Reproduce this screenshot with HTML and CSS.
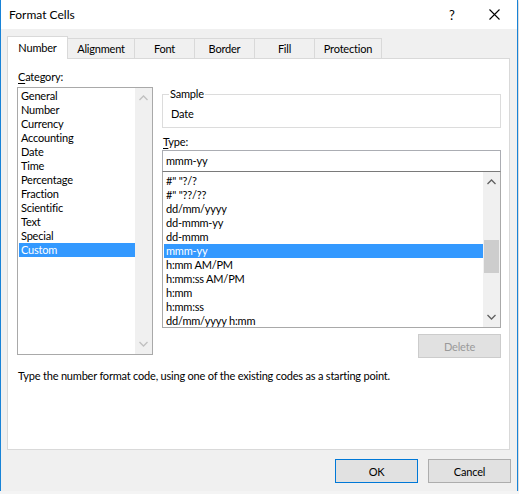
FILE: index.html
```html
<!DOCTYPE html>
<html lang="en">
<head>
    <meta charset="UTF-8">
    <title>Format Cells</title>
    <link rel="stylesheet" href="styles.css">
</head>
<body>

<div class="dialog">
    <div class="titlebar">
        <span class="title">Format Cells</span>
        <span class="help">?</span>
        <span class="close">
            <svg width="11" height="11" viewBox="0 0 11 11"><path d="M0.5 0.5L10.5 10.5M10.5 0.5L0.5 10.5" stroke="#000" stroke-width="1.1" fill="none"/></svg>
        </span>
    </div>

    <div class="tabs">
        <div class="tab active">Number</div>
        <div class="tab w67">Alignment</div>
        <div class="tab">Font</div>
        <div class="tab">Border</div>
        <div class="tab">Fill</div>
        <div class="tab w67">Protection</div>
    </div>

    <div class="panel">
        <div class="columns">
            <div class="left">
                <div class="label"><u>C</u>ategory:</div>
                <div class="listbox category">
                    <div class="items">
                        <div class="item">General</div>
                        <div class="item">Number</div>
                        <div class="item">Currency</div>
                        <div class="item">Accounting</div>
                        <div class="item">Date</div>
                        <div class="item">Time</div>
                        <div class="item">Percentage</div>
                        <div class="item">Fraction</div>
                        <div class="item">Scientific</div>
                        <div class="item">Text</div>
                        <div class="item">Special</div>
                        <div class="item selected">Custom</div>
                    </div>
                    <div class="scrollbar disabled">
                        <svg class="arrow" width="9" height="6" viewBox="0 0 9 6"><path d="M0.5 5L4.5 1L8.5 5" stroke="currentColor" stroke-width="1.3" fill="none"/></svg>
                        <div class="track"></div>
                        <svg class="arrow" width="9" height="6" viewBox="0 0 9 6"><path d="M0.5 1L4.5 5L8.5 1" stroke="currentColor" stroke-width="1.3" fill="none"/></svg>
                    </div>
                </div>
            </div>

            <div class="right">
                <fieldset class="sample">
                    <legend>Sample</legend>
                    <div class="sample-value">Date</div>
                </fieldset>

                <div class="label type-label"><u>T</u>ype:</div>
                <div class="input">mmm-yy</div>
                <div class="listbox types">
                    <div class="items">
                        <div class="item">#" "?/?</div>
                        <div class="item">#" "??/??</div>
                        <div class="item">dd/mm/yyyy</div>
                        <div class="item">dd-mmm-yy</div>
                        <div class="item">dd-mmm</div>
                        <div class="item selected">mmm-yy</div>
                        <div class="item">h:mm AM/PM</div>
                        <div class="item">h:mm:ss AM/PM</div>
                        <div class="item">h:mm</div>
                        <div class="item">h:mm:ss</div>
                        <div class="item">dd/mm/yyyy h:mm</div>
                    </div>
                    <div class="scrollbar">
                        <svg class="arrow" width="9" height="6" viewBox="0 0 9 6"><path d="M0.5 5L4.5 1L8.5 5" stroke="currentColor" stroke-width="1.3" fill="none"/></svg>
                        <div class="track"><div class="thumb"></div></div>
                        <svg class="arrow" width="9" height="6" viewBox="0 0 9 6"><path d="M0.5 1L4.5 5L8.5 1" stroke="currentColor" stroke-width="1.3" fill="none"/></svg>
                    </div>
                </div>
                <div class="delete-row">
                    <button class="button disabled">Delete</button>
                </div>
            </div>
        </div>

        <p class="hint">Type the number format code, using one of the existing codes as a starting point.</p>
    </div>

    <div class="footer">
        <button class="button default">OK</button>
        <button class="button">Cancel</button>
    </div>
</div>

</body>
</html>
```

FILE: styles.css
```css
body {
    margin: 0;
    background: #f4f4f4;
    font-family: Lato, "Noto Sans", sans-serif;
    font-size: 11px;
    letter-spacing: -0.2px;
    color: #000;
}
.dialog {
    width: 516px;
    height: 491px;
    border-left: 1px solid #1883d7;
    border-right: 1px solid #1883d7;
    background: #f0f0f0;
    box-shadow: 0 1px 3px rgba(0, 0, 0, 0.25);
    display: flex;
    flex-direction: column;
}
.titlebar {
    height: 29px;
    background: #fff;
    display: flex;
    align-items: center;
    padding-left: 8px;
    font-size: 12px;
    letter-spacing: 0;
}
.title {
    flex: 1;
}
.help {
    width: 20px;
    margin-right: 27px;
    text-align: center;
    font-size: 13px;
}
.close {
    width: 11px;
    margin-right: 17px;
    display: flex;
}
.tabs {
    display: flex;
    align-items: flex-end;
    margin: 7px 0 0 6px;
    height: 22px;
}
.tab {
    width: 60px;
    height: 20px;
    box-sizing: border-box;
    border: 1px solid #d9d9d9;
    border-left: none;
    border-bottom: none;
    text-align: center;
    line-height: 20px;
}
.tab.w67 {
    width: 67px;
}
.tab.active {
    width: 61px;
    height: 23px;
    line-height: 22px;
    background: #fff;
    border-left: 1px solid #d9d9d9;
    margin-bottom: -1px;
    position: relative;
}
.panel {
    margin: 0 7px 0 6px;
    height: 392px;
    box-sizing: border-box;
    background: #fff;
    border: 1px solid #d9d9d9;
    padding: 10px 8px 0 9px;
}
.columns {
    display: grid;
    grid-template-columns: 136px 339px;
    gap: 9px;
}
.label {
    height: 15px;
    line-height: 15px;
    padding-left: 1px;
}
.label u {
    text-decoration-thickness: 1px;
    text-underline-offset: 2px;
}
.listbox {
    border: 1px solid #a9a9a9;
    background: #fff;
    display: flex;
    box-sizing: border-box;
}
.category {
    margin-top: 3px;
    height: 268px;
}
.items {
    flex: 1;
    padding: 1px 0 0 1px;
}
.item {
    height: 14px;
    line-height: 14px;
    padding-left: 2px;
    white-space: nowrap;
}
.item.selected {
    background: #3399ff;
    color: #fff;
}
.scrollbar {
    width: 17px;
    background: #f0f0f0;
    display: flex;
    flex-direction: column;
    align-items: center;
    color: #606060;
}
.scrollbar.disabled {
    color: #c0c0c0;
}
.arrow {
    margin: 7px 0;
    flex: none;
}
.track {
    flex: 1;
    align-self: stretch;
}
.thumb {
    margin: 48px 1px 0 1px;
    height: 33px;
    background: #cdcdcd;
}
.sample {
    margin: 18px 0 0;
    padding: 0 6px;
    height: 41px;
    box-sizing: border-box;
    border: 1px solid #dcdcdc;
}
.sample legend {
    padding: 0 1px;
    line-height: 14px;
}
.sample-value {
    margin-top: 6px;
    line-height: 14px;
    padding-left: 2px;
}
.type-label {
    margin-top: 6px;
}
.input {
    margin-top: 1px;
    height: 22px;
    box-sizing: border-box;
    border: 1px solid #abadb3;
    border-bottom-color: #7a7a7a;
    line-height: 20px;
    padding-left: 3px;
}
.types {
    margin-top: -1px;
    height: 157px;
    border-top-color: #7a7a7a;
}
.types .items {
    padding-top: 2px;
}
.delete-row {
    display: flex;
    justify-content: flex-end;
    margin-top: 6px;
}
.button {
    font-family: inherit;
    font-size: 11px;
    letter-spacing: inherit;
    width: 83px;
    height: 24px;
    box-sizing: border-box;
    background: #e1e1e1;
    border: 1px solid #adadad;
    color: #000;
    padding: 0;
}
.button.disabled {
    background: #e1e1e1;
    border-color: #cccccc;
    color: #9a9a9a;
}
.button.default {
    border-color: #0078d7;
}
.hint {
    margin: 11px 0 0 1px;
    line-height: 14px;
}
.footer {
    display: flex;
    justify-content: flex-end;
    gap: 10px;
    margin: 9px 6px 0 0;
}
```
